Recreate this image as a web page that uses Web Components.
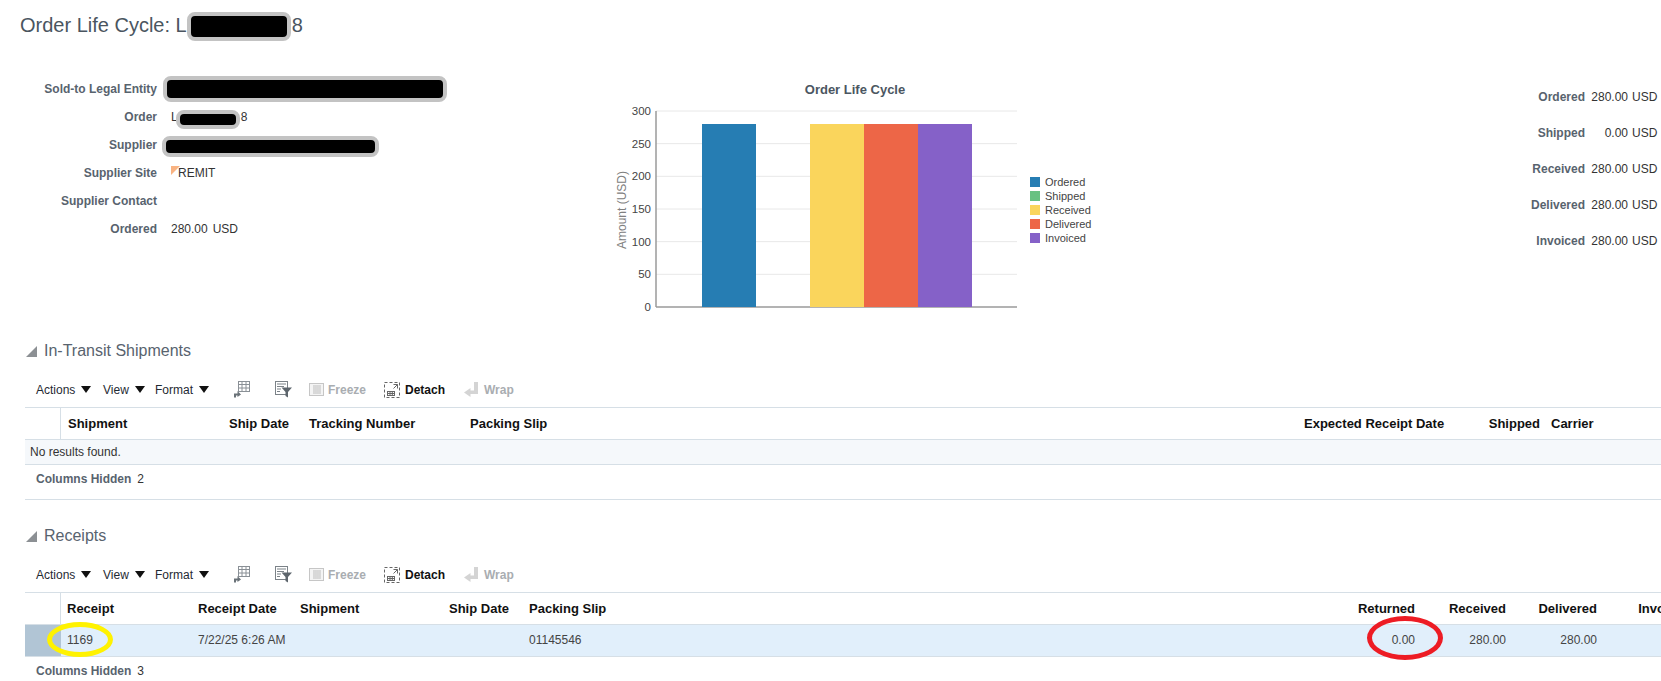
<!doctype html>
<html>
<head>
<meta charset="utf-8">
<title>Order Life Cycle</title>
<style>
html, body { margin: 0; padding: 0; background: #fff; overflow: hidden; }
body { font: 12px "Liberation Sans", Arial, sans-serif; color: #333; width: 1661px; height: 681px; }
</style>
</head>
<body>
<order-page></order-page>
<script>
// blob drawn over sensitive text, and the marker rings
class InkMark extends HTMLElement {
  connectedCallback () {
    const [x, y, w, h] = ['x', 'y', 'w', 'h'].map(a => this.getAttribute(a))
    this.attachShadow({ mode: 'open' }).innerHTML = `
<style>
:host { position: absolute; left: ${x}px; top: ${y}px; width: ${w}px; height: ${h}px; box-sizing: border-box; display: block; pointer-events: none; }
.redact { width: 100%; height: 100%; box-sizing: border-box; background: #000; border: 4.5px solid #c3c3c3; border-radius: 8px; }
.ring { width: 100%; height: 100%; box-sizing: border-box; border: 5px solid ${this.getAttribute('color')}; border-radius: 50%; }
</style>
<div class="${this.hasAttribute('color') ? 'ring' : 'redact'}"></div>`
  }
}

class FormRow extends HTMLElement {
  constructor () {
    super()
    this.attachShadow({ mode: 'open' }).innerHTML = `
<style>
:host { display: flex; height: 28px; align-items: center; }
.label { width: 157px; text-align: right; font-weight: bold; color: #58636e; }
.value { margin-left: 14px; color: #333; white-space: pre; }
</style>
<div class="label"></div><div class="value"><slot></slot></div>`
  }

  connectedCallback () {
    this.shadowRoot.querySelector('.label').textContent = this.getAttribute('label')
  }
}

class TotalRow extends HTMLElement {
  constructor () {
    super()
    this.attachShadow({ mode: 'open' }).innerHTML = `
<style>
:host { display: flex; height: 36px; align-items: center; justify-content: flex-end; }
.label { font-weight: bold; color: #58636e; }
.amt { width: 43px; text-align: right; color: #333; }
.cur { margin-left: 4px; width: 29px; color: #333; }
</style>
<div class="label"></div><div class="amt"></div><div class="cur">USD</div>`
  }

  connectedCallback () {
    this.shadowRoot.querySelector('.label').textContent = this.getAttribute('label')
    this.shadowRoot.querySelector('.amt').textContent = this.getAttribute('amount')
  }
}

class LifeChart extends HTMLElement {
  constructor () {
    super()
    const ticks = [300, 250, 200, 150, 100, 50, 0]
    const y = t => 307 - t * 196 / 300
    const grid = ticks.map(t => `
  <line x1="656" x2="1017" y1="${y(t)}" y2="${y(t)}" stroke="${t ? '#e8e8e8' : '#9a9a9a'}" stroke-width="${t ? 1 : 1.5}"/>
  <text x="651" y="${y(t) + 4}" text-anchor="end" font-size="11.5" fill="#444">${t}</text>`).join('')
    const bars = [[702, '#267db3'], [810, '#fad55c'], [864, '#ed6647'], [918, '#8561c8']].map(([x, c]) => `
  <rect x="${x}" y="124" width="54" height="183" fill="${c}"/>`).join('')
    const legend = [['Ordered', '#267db3'], ['Shipped', '#68c182'], ['Received', '#fad55c'], ['Delivered', '#ed6647'], ['Invoiced', '#8561c8']].map(([t, c], i) => `
  <rect x="1030" y="${177 + i * 14}" width="10" height="10" fill="${c}"/>
  <text x="1045" y="${186 + i * 14}" font-size="11" fill="#444">${t}</text>`).join('')
    this.attachShadow({ mode: 'open' }).innerHTML = `
<style>
:host { display: block; width: 540px; height: 261px; flex: none; }
svg { display: block; font-family: "Liberation Sans", Arial, sans-serif; }
</style>
<svg width="540" height="261" viewBox="560 74 540 261">
  <text x="855" y="94" text-anchor="middle" font-size="13" font-weight="bold" fill="#4b5661">Order Life Cycle</text>
  <text transform="translate(626 210) rotate(-90)" text-anchor="middle" font-size="12" fill="#808080">Amount (USD)</text>
  ${grid}
  ${bars}
  <line x1="656" x2="656" y1="111" y2="307" stroke="#9a9a9a" stroke-width="1.5"/>
  ${legend}
</svg>`
  }
}

const toolIcons = {
  cols: `<svg width="17" height="17" viewBox="0 0 17 17"><g fill="none" stroke="#8a9096"><rect x="5.5" y=".5" width="11" height="10"/><path d="M5.5 3.500h11M9 .5v10M13 .5v10M5.500 7h11"/></g><path d="M1 16.500v-4h3.500V10l3.500 3.500-3.500 2.500v-1.500H3v2z" fill="#6a7278"/></svg>`,
  filter: `<svg width="17" height="17" viewBox="0 0 17 17"><rect x=".5" y=".5" width="12" height="13" fill="#fff" stroke="#7b8288"/><path d="M2 3h9M2 5.500h7M2 8h4M2 10.500h3" stroke="#7b8288"/><path d="M6.500 6.500H17l-4 4.500v5.500l-2.500-1.500v-4z" fill="#5d656c"/></svg>`,
  freeze: `<svg width="15" height="15" viewBox="0 0 15 15"><rect x=".5" y="1.500" width="14" height="12" fill="#f4f4f4" stroke="#c6c6c6"/><path d="M5 3v9M7 3v9M9 3v9M11 3v9" stroke="#bdbdbd"/></svg>`,
  detach: `<svg width="16" height="16" viewBox="0 0 16 16"><rect x=".5" y=".5" width="15" height="15" fill="none" stroke="#666" stroke-dasharray="3 2"/><path d="M9.500 2.500h4v4M13.500 2.500 9.500 6.500" fill="none" stroke="#666"/><g fill="none" stroke="#666"><rect x="3.500" y="9.500" width="7" height="4"/><path d="M3.500 11.500h7M6 9.500v4M8.300 9.500v4"/></g></svg>`,
  wrap: `<svg width="15" height="15" viewBox="0 0 15 15"><path d="M10 0h4v12H6.500v3L0 10.500 6.500 6v2.500H10z" fill="#d4d4d4"/></svg>`
}

class DataToolbar extends HTMLElement {
  constructor () {
    super()
    const menu = (t, w) => `<span class="menu" style="width:${w}px">${t}<i></i></span>`
    const tool = (icon, gap) => `<span class="tool" style="margin-right:${gap}px">${toolIcons[icon]}</span>`
    this.attachShadow({ mode: 'open' }).innerHTML = `
<style>
:host { display: flex; align-items: center; box-sizing: border-box; height: 42px; padding: 7px 0 0 36px; color: #1f2a33; }
.menu { display: flex; align-items: center; flex: none; white-space: nowrap; }
.menu i { margin-left: 6px; border: 5px solid transparent; border-top: 7px solid #111; border-bottom: 0; }
.tool { display: flex; flex: none; }
.off { color: #a9adb1; font-weight: bold; }
.on { color: #111; font-weight: bold; }
</style>
${menu('Actions', 67)}${menu('View', 52)}${menu('Format', 78)}
${tool('cols', 25)}${tool('filter', 17)}${tool('freeze', 4)}<span class="off" style="width:56px">Freeze</span>
${tool('detach', 5)}<span class="on" style="width:59px">Detach</span>
${tool('wrap', 5)}<span class="off">Wrap</span>`
  }
}

class SectionHead extends HTMLElement {
  constructor () {
    super()
    this.attachShadow({ mode: 'open' }).innerHTML = `
<style>
:host { display: flex; align-items: center; box-sizing: border-box; height: 30px; padding: 2px 0 0 26px; font-size: 16px; color: #58636e; }
svg { margin-right: 7px; }
</style>
<svg width="11" height="11" viewBox="0 0 11 11"><path d="M11 0v11H0z" fill="#8c9094"/></svg><slot></slot>`
  }
}

// one table row: cols is the grid template, cells come through slots
class DataRow extends HTMLElement {
  constructor () {
    super()
    this.attachShadow({ mode: 'open' }).innerHTML = `
<style>
:host { display: grid; box-sizing: border-box; width: 1780px; align-items: center; border-bottom: 1px solid #d6dfe6; }
:host([head]) { font-weight: bold; font-size: 13px; color: #111; }
:host([head]) ::slotted(:first-child) { align-self: stretch; border-right: 1px solid #d6dfe6; }
:host([selected]) { background: #e1effb; color: #444; }
:host([selected]) ::slotted(*) { margin-top: -2px; }
:host([selected]) ::slotted(:first-child) { align-self: stretch; background: #b1c5d5; margin-top: 0; }
::slotted(*) { padding: 0 7px; white-space: nowrap; box-sizing: border-box; }
::slotted(.r) { text-align: right; }
::slotted(.first) { padding-left: 6px; }
</style>
<slot></slot>`
  }

  connectedCallback () {
    this.style.gridTemplateColumns = this.getAttribute('cols')
    this.style.height = this.getAttribute('h') + 'px'
  }
}

class DataTable extends HTMLElement {
  constructor () {
    super()
    this.attachShadow({ mode: 'open' }).innerHTML = `
<style>
:host { display: block; margin-left: 25px; overflow: hidden; border-top: 1px solid #d6dfe6; }
</style>
<slot></slot>`
  }
}

class TableFooter extends HTMLElement {
  constructor () {
    super()
    this.attachShadow({ mode: 'open' }).innerHTML = `
<style>
:host { display: block; box-sizing: border-box; padding: 6px 0 0 11px; line-height: 16px; color: #58636e; }
b { margin-right: 6px; }
span { color: #333; }
</style>
<b>Columns Hidden</b><span><slot></slot></span>`
  }
}

class OrderPage extends HTMLElement {
  constructor () {
    super()
    const shipCols = '36px 161px 80px 161px 834px 153px 97px auto'
    const recCols = '36px 130px 102px 149px 80px 818px 82px 91px 91px 94px'
    this.attachShadow({ mode: 'open' }).innerHTML = `
<style>
:host { display: block; position: relative; width: 1661px; height: 681px; overflow: hidden; }
h1 { margin: 0; height: 74px; box-sizing: border-box; padding-left: 20px; font: normal 20px/50px "Liberation Sans", Arial, sans-serif; color: #4a5560; }
h1 .gap { display: inline-block; width: 105px; }
.summary { display: flex; height: 261px; }
.form { width: 560px; flex: none; padding-top: 1px; }
.totals { flex: 1; padding: 5px 0 0 0; }
.site { display: flex; align-items: center; }
.site svg { margin-right: -2px; align-self: flex-start; }
.order .gap { display: inline-block; width: 63px; }
.usd { margin-left: 5px; }
.receipts { margin-top: 20px; }
.shipments { border-bottom: 1px solid #d6dfe6; margin-left: 25px; height: 34px; }
.no { background: #f5f8fb; padding-left: 5px; line-height: 24px; }
</style>
<h1>Order Life Cycle: L<span class="gap"></span>8</h1>
<div class="summary">
  <div class="form">
    <form-row label="Sold-to Legal Entity"></form-row>
    <form-row label="Order"><span class="order">L<span class="gap"></span>8</span></form-row>
    <form-row label="Supplier"></form-row>
    <form-row label="Supplier Site"><span class="site"><svg width="9" height="9" viewBox="0 0 9 9"><path d="M0 0h9L0 9z" fill="#f9b382"/></svg>REMIT</span></form-row>
    <form-row label="Supplier Contact"></form-row>
    <form-row label="Ordered">280.00<span class="usd">USD</span></form-row>
  </div>
  <life-chart></life-chart>
  <div class="totals">
    <total-row label="Ordered" amount="280.00"></total-row>
    <total-row label="Shipped" amount="0.00"></total-row>
    <total-row label="Received" amount="280.00"></total-row>
    <total-row label="Delivered" amount="280.00"></total-row>
    <total-row label="Invoiced" amount="280.00"></total-row>
  </div>
</div>

<section-head>In-Transit Shipments</section-head>
<data-toolbar></data-toolbar>
<data-table>
  <data-row head cols="${shipCols}" h="32"><div></div><div>Shipment</div><div>Ship Date</div><div>Tracking Number</div><div>Packing Slip</div><div>Expected Receipt Date</div><div class="r">Shipped</div><div style="padding-left:4px">Carrier</div></data-row>
  <data-row cols="1fr" h="25"><div class="no">No results found.</div></data-row>
</data-table>
<div class="shipments"><table-footer>2</table-footer></div>

<div class="receipts">
  <section-head>Receipts</section-head>
  <data-toolbar></data-toolbar>
  <data-table>
    <data-row head cols="${recCols}" h="32"><div></div><div class="first">Receipt</div><div>Receipt Date</div><div>Shipment</div><div>Ship Date</div><div>Packing Slip</div><div class="r">Returned</div><div class="r">Received</div><div class="r">Delivered</div><div class="r">Invoiced</div></data-row>
    <data-row selected cols="${recCols}" h="32"><div></div><div class="first">1169</div><div>7/22/25 6:26 AM</div><div></div><div></div><div>01145546</div><div class="r">0.00</div><div class="r">280.00</div><div class="r">280.00</div><div></div></data-row>
  </data-table>
  <table-footer style="margin-left:25px">3</table-footer>
</div>

<ink-mark x="187" y="12" w="104" h="29"></ink-mark>
<ink-mark x="163" y="76" w="284" h="26"></ink-mark>
<ink-mark x="176" y="110" w="64" h="19"></ink-mark>
<ink-mark x="162" y="136" w="217" h="21"></ink-mark>
<ink-mark x="47" y="622" w="66" h="35" color="#fff200"></ink-mark>
<ink-mark x="1367" y="616" w="76" h="44" color="#ed1c24"></ink-mark>`
  }
}

customElements.define('ink-mark', InkMark)
customElements.define('form-row', FormRow)
customElements.define('total-row', TotalRow)
customElements.define('life-chart', LifeChart)
customElements.define('data-toolbar', DataToolbar)
customElements.define('section-head', SectionHead)
customElements.define('data-row', DataRow)
customElements.define('data-table', DataTable)
customElements.define('table-footer', TableFooter)
customElements.define('order-page', OrderPage)
</script>
</body>
</html>
